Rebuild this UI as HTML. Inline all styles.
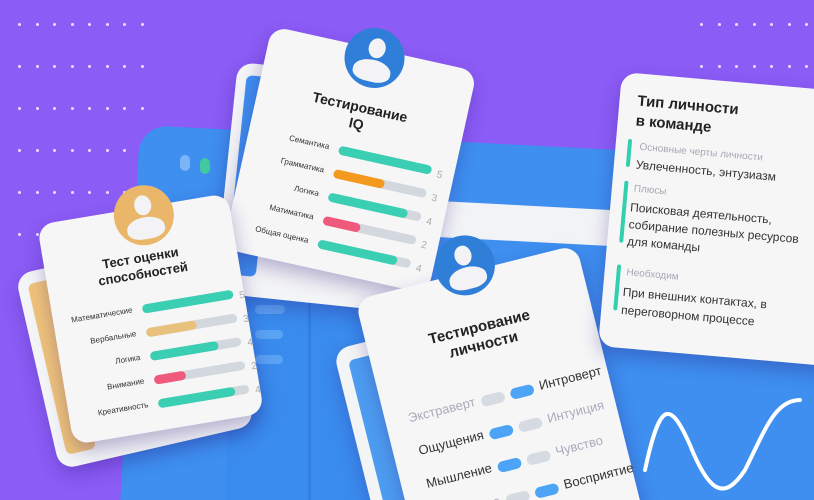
<!DOCTYPE html>
<html style="width:814px;height:500px;overflow:hidden"><head><meta charset="utf-8"><style>
*{margin:0;padding:0;box-sizing:border-box}
body{width:814px;height:500px;overflow:hidden;background:#8c5cf6;position:relative;font-family:"Liberation Sans",Arial,sans-serif}
.abs{position:absolute}
.card{position:absolute;background:#f6f6f7;border-radius:16px;transform-origin:0 0;box-shadow:0 8px 18px rgba(40,20,120,.3)}
.av{position:absolute;border-radius:50%;width:60px;height:60px}
.av .h{position:absolute;left:22px;top:10px;width:17px;height:20px;border-radius:50%;background:#f3f3f5}
.av .b{position:absolute;left:11px;top:32px;width:38px;height:22px;border-radius:50% 50% 40% 40%;background:#f3f3f5}
.bar{position:absolute;height:9px;border-radius:5px;background:#d3d8de}
.bar i{position:absolute;left:0;top:0;bottom:0;border-radius:5px}
.num{position:absolute;color:#aaa;font-size:10px}
.pill{position:absolute;width:24px;height:11px;border-radius:6px}
.g{background:#d5dbe0}.bl{background:#4da3f5}
.t{position:absolute;white-space:nowrap}
.dot{position:absolute;width:3px;height:3px;background:#e9e0ff;border-radius:50%}
#wrap{position:absolute;left:0;top:0;width:814px;height:500px;overflow:hidden}
</style></head><body><div id="wrap">
<div id="dots"></div>
<div class="abs" style="left:140px;top:125px;width:720px;height:420px;background:#3e8ff0;border-radius:28px;transform:rotate(3deg);transform-origin:0 0"></div>
<div class="abs" style="left:180px;top:155px;width:10px;height:16px;border-radius:5px;background:#7bb5f7"></div>
<div class="abs" style="left:200px;top:158px;width:10px;height:16px;border-radius:5px;background:#41c9a0"></div>
<div class="abs" style="left:420px;top:200px;width:420px;height:36px;background:#f2f3f6;transform:rotate(3deg);transform-origin:0 0"></div>
<div class="abs" style="left:230px;top:280px;width:200px;height:240px;background:#3a8bee;transform:rotate(3deg)"></div>
<div class="abs" style="left:308px;top:285px;width:3px;height:220px;background:#2f7fe4"></div>
<div class="abs" style="left:255px;top:305px;width:30px;height:9px;border-radius:5px;background:#5aa2f4"></div>
<div class="abs" style="left:255px;top:330px;width:28px;height:9px;border-radius:5px;background:#5aa2f4"></div>
<div class="abs" style="left:255px;top:355px;width:28px;height:9px;border-radius:5px;background:#5aa2f4"></div>
<svg class="abs" style="left:0;top:0" width="814" height="500"><path d="M645 470 C660 400 670 400 690 445 C710 495 725 500 745 470 C765 430 775 400 800 400" fill="none" stroke="#fff" stroke-width="4" stroke-linecap="round"/></svg>

<div class="card" style="left:238px;top:62px;width:200px;height:232px;transform:rotate(6deg);background:#f3f4f6">
 <div class="abs" style="left:10px;top:12px;width:30px;height:200px;background:#3f8ff0;border-radius:6px"></div></div>
<div class="card" style="left:272px;top:26px;width:210px;height:228px;transform:rotate(12.5deg)">
 <div class="av" style="left:77px;top:-21px;background:#2f7fd8"><div class="h"></div><div class="b"></div></div>
 <div class="t" style="left:0;width:207px;top:52px;text-align:center;font-weight:bold;font-size:14px;line-height:17px;color:#222">Тестирование<br>IQ</div>
 <div id="iq"></div>
</div>
<div class="card" style="left:15px;top:275px;width:200px;height:200px;transform:rotate(-13deg);background:#f3f4f6">
 <div class="abs" style="left:10px;top:12px;width:30px;height:175px;background:#efc27a;border-radius:6px"></div></div>
<div class="card" style="left:37px;top:225px;width:193px;height:223px;transform:rotate(-9.5deg)">
 <div class="av" style="left:77px;top:-22px;background:#e9b66a"><div class="h"></div><div class="b"></div></div>
 <div class="t" style="left:0;width:193px;top:42px;text-align:center;font-weight:bold;font-size:13px;line-height:16px;color:#222">Тест оценки<br>способностей</div>
 <div id="ab"></div>
</div>
<div class="card" style="left:333px;top:350px;width:200px;height:220px;transform:rotate(-14deg);background:#f3f4f6">
 <div class="abs" style="left:12px;top:14px;width:30px;height:200px;background:#4d9cf0;border-radius:6px"></div></div>
<div class="card" style="left:355px;top:300px;width:228px;height:300px;transform:rotate(-14deg)">
 <div class="av" style="left:85px;top:-37px;background:#2f7fd8"><div class="h"></div><div class="b"></div></div>
 <div class="t" style="left:0;width:228px;top:48px;text-align:center;font-weight:bold;font-size:15px;line-height:18px;color:#222">Тестирование<br>личности</div>
 <div id="ps"></div>
</div>
<div class="card" style="left:622px;top:72px;width:260px;height:275px;transform:rotate(5deg)">
 <div class="t" style="left:18px;top:18px;font-weight:bold;font-size:15px;line-height:20px;color:#222">Тип личности<br>в команде</div>
 <div class="abs" style="left:12px;top:66px;width:4px;height:28px;border-radius:2px;background:#34d0ad"></div>
 <div class="t" style="left:24px;top:68px;font-size:10px;color:#a7a7b5">Основные черты личности</div>
 <div class="t" style="left:22px;top:84px;font-size:12px;color:#333">Увлеченность, энтузиазм</div>
 <div class="abs" style="left:12px;top:108px;width:4px;height:62px;border-radius:2px;background:#34d0ad"></div>
 <div class="t" style="left:22px;top:110px;font-size:10px;color:#a7a7b5">Плюсы</div>
 <div class="t" style="left:20px;top:126px;font-size:12px;line-height:17px;color:#333">Поисковая деятельность,<br>собирание полезных ресурсов<br>для команды</div>
 <div class="abs" style="left:12px;top:192px;width:4px;height:46px;border-radius:2px;background:#34d0ad"></div>
 <div class="t" style="left:22px;top:194px;font-size:10px;color:#a7a7b5">Необходим</div>
 <div class="t" style="left:20px;top:210px;font-size:12px;line-height:18px;color:#333">При внешних контактах, в<br>переговорном процессе</div>
</div>
</div>
<script>
var d=document.getElementById('dots'),h='';
for(var r=0;r<6;r++)for(var c=0;c<8;c++)h+='<div class="dot" style="left:'+(18+c*17.5)+'px;top:'+(23+r*42)+'px"></div>';
for(var r=0;r<3;r++)for(var c=0;c<7;c++)h+='<div class="dot" style="left:'+(700+c*17.5)+'px;top:'+(23+r*42)+'px"></div>';
d.innerHTML=h;
function rows(id,data,y0,step,lx,bx,bw){var s='';data.forEach(function(a,i){var y=y0+i*step;
s+='<div class="t" style="left:0;width:'+lx+'px;text-align:right;top:'+(y-1)+'px;font-size:8px;color:#333">'+a[0]+'</div>';
s+='<div class="bar" style="left:'+bx+'px;top:'+y+'px;width:'+bw+'px"><i style="width:'+a[1]+'%;background:'+a[2]+'"></i></div>';
s+='<div class="num" style="left:'+(bx+bw+6)+'px;top:'+(y+2)+'px">'+a[3]+'</div>';});
document.getElementById(id).innerHTML=s;}
var G='#3acfb3',O='#f39a1e',P='#ef5a7c',Y='#e8c27d';
rows('iq',[['Семантика',100,G,5],['Грамматика',55,O,3],['Логика',85,G,4],['Матиматика',40,P,2],['Общая оценка',85,G,4]],102,24,82,92,95);
rows('ab',[['Математические',100,G,5],['Вербальные',55,Y,3],['Логика',75,G,4],['Внимание',35,P,2],['Креативность',85,G,4]],96,24,80,90,92);
var ps=[['Экстраверт','Интроверт',0],['Ощущения','Интуиция',1],['Мышление','Чувство',1],['Суждение','Восприятие',0]],s='';
ps.forEach(function(a,i){var y=122+i*34;var L=a[2]==1,on='#333',off='#aab';
s+='<div class="t" style="left:0;width:92px;text-align:right;top:'+(y-2)+'px;font-size:13px;color:'+(L?on:off)+'">'+a[0]+'</div>';
s+='<div class="pill '+(L?'bl':'g')+'" style="left:98px;top:'+(y+2)+'px"></div>';
s+='<div class="pill '+(L?'g':'bl')+'" style="left:128px;top:'+(y+2)+'px"></div>';
s+='<div class="t" style="left:158px;top:'+(y-2)+'px;font-size:13px;color:'+(L?off:on)+'">'+a[1]+'</div>';});
document.getElementById('ps').innerHTML=s;
</script>
</body></html>
